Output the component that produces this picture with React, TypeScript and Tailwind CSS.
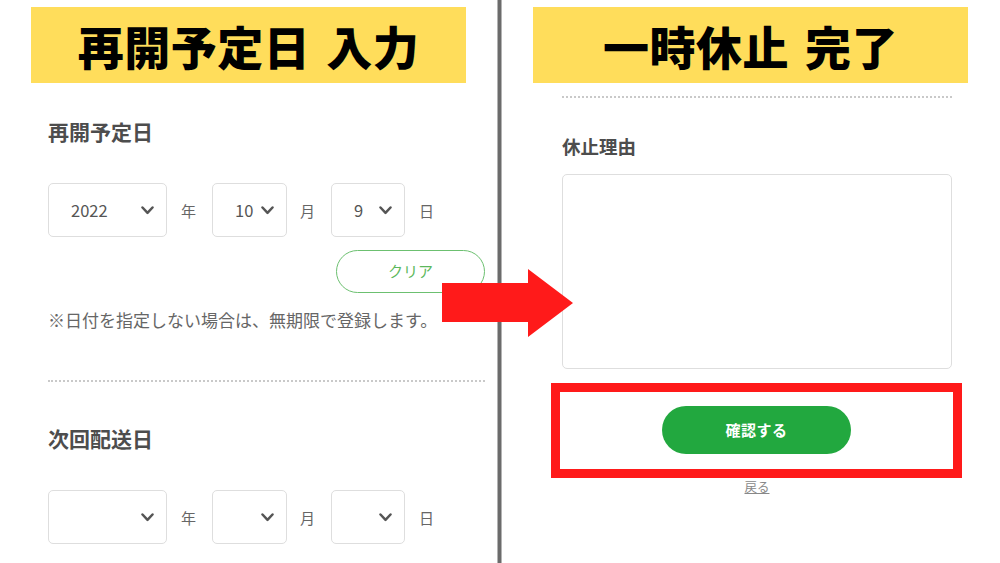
import React from "react";

const JP = '"Noto Sans CJK JP", "Noto Sans", sans-serif';

function Chevron() {
  return (
    <svg width="13" height="9" viewBox="0 0 13 9" className="shrink-0">
      <path d="M1.5 1.5 L6.5 6.8 L11.5 1.5" fill="none" stroke="#555" strokeWidth="2.5" strokeLinecap="round" strokeLinejoin="round" />
    </svg>
  );
}

function Select({ w, value }: { w: string; value?: string }) {
  return (
    <div className={`${w} h-[54px] shrink-0 rounded-[5px] border border-[#dedede] bg-white flex items-center justify-between pl-[22px] pr-[12px]`}>
      <span className="text-[16.5px] leading-none text-[#555]">{value ?? ""}</span>
      <Chevron />
    </div>
  );
}

function DateRow({ y, m, d }: { y?: string; m?: string; d?: string }) {
  return (
    <div className="flex items-center shrink-0">
      <Select w="w-[119px]" value={y} />
      <span className="ml-[14px] mr-[16px] w-[15px] text-[15px] leading-none text-[#666]">年</span>
      <Select w="w-[75px]" value={m} />
      <span className="ml-[13px] mr-[16px] w-[15px] text-[15px] leading-none text-[#666]">月</span>
      <Select w="w-[74px]" value={d} />
      <span className="ml-[14px] w-[15px] text-[15px] leading-none text-[#666]">日</span>
    </div>
  );
}

export default function App() {
  return (
    <div className="relative w-[1000px] h-[563px] overflow-hidden bg-white flex" style={{ fontFamily: JP }}>
      {/* Left panel */}
      <div className="w-[497px] shrink-0 min-w-0 h-full overflow-hidden flex flex-col">
        <div className="shrink-0 ml-[31px] mt-[7px] w-[435px] h-[76px] bg-[#ffdd5b] flex items-center justify-center">
          <span className="text-[46px] leading-none font-black text-black tracking-[0.5px]">再開予定日<span className="inline-block w-[16px]"></span>入力</span>
        </div>
        <div className="shrink-0 pl-[48px] pr-[12px] flex flex-col">
          <div className="shrink-0 mt-[38px] text-[21px] leading-none font-bold text-[#4d4d4d]">再開予定日</div>
          <div className="shrink-0 mt-[41px]">
            <DateRow y="2022" m="10" d="9" />
          </div>
          <div className="shrink-0 mt-[13px] self-end w-[149px] h-[43px] rounded-full border-[1.5px] border-[#6cc070] flex items-center justify-center text-[15px] text-[#5cb85c]">
            クリア
          </div>
          <div className="shrink-0 mt-[18px] text-[17px] leading-none text-[#666] whitespace-nowrap">※日付を指定しない場合は、無期限で登録します。</div>
          <div className="shrink-0 mt-[52px] border-t-2 border-dotted border-[#c9c9c9]"></div>
          <div className="shrink-0 mt-[46px] text-[21px] leading-none font-bold text-[#4d4d4d]">次回配送日</div>
          <div className="shrink-0 mt-[41px]">
            <DateRow />
          </div>
          <div className="shrink-0 mt-[22px] text-[17px] leading-none text-[#666] whitespace-nowrap">※日付を指定しない場合は、通常通りお届けします。</div>
        </div>
      </div>

      {/* Divider */}
      <div className="w-[5px] shrink-0 h-full bg-[#6b6b6b] border-x border-[#b3b3b3]"></div>

      {/* Right panel */}
      <div className="w-[498px] shrink-0 min-w-0 flex flex-col">
        <div className="shrink-0 ml-[31px] mt-[7px] w-[435px] h-[76px] bg-[#ffdd5b] flex items-center justify-center">
          <span className="text-[46px] leading-none font-black text-black tracking-[0.5px]">一時休止<span className="inline-block w-[16px]"></span>完了</span>
        </div>
        <div className="w-[498px] pl-[60px] pr-[48px] flex flex-col">
          <div className="mt-[13px] border-t-2 border-dotted border-[#c9c9c9]"></div>
          <div className="mt-[39px] text-[18.5px] leading-none font-bold text-[#4d4d4d]">休止理由</div>
          <div className="mt-[18px] h-[195px] rounded-[5px] border-[1.5px] border-[#dedede] bg-white"></div>
          <div className="mt-[14px] ml-[-11px] mr-[-10px] h-[95px] border-[9px] border-[#ff1a1a] flex items-center justify-center">
            <div className="w-[189px] h-[48px] rounded-full bg-[#22a83f] flex items-center justify-center text-[15px] font-bold text-white tracking-[0.5px]">
              確認する
            </div>
          </div>
          <div className="mt-[1px] self-center text-[12.5px] leading-[16px] text-[#888] underline">戻る</div>
        </div>
      </div>

      {/* Arrow annotation */}
      <svg className="absolute left-[442px] top-[269px]" width="131" height="68" viewBox="0 0 131 68">
        <polygon points="0,14 86,14 86,0 131,34 86,68 86,53 0,53" fill="#ff1a1a" />
      </svg>
    </div>
  );
}
